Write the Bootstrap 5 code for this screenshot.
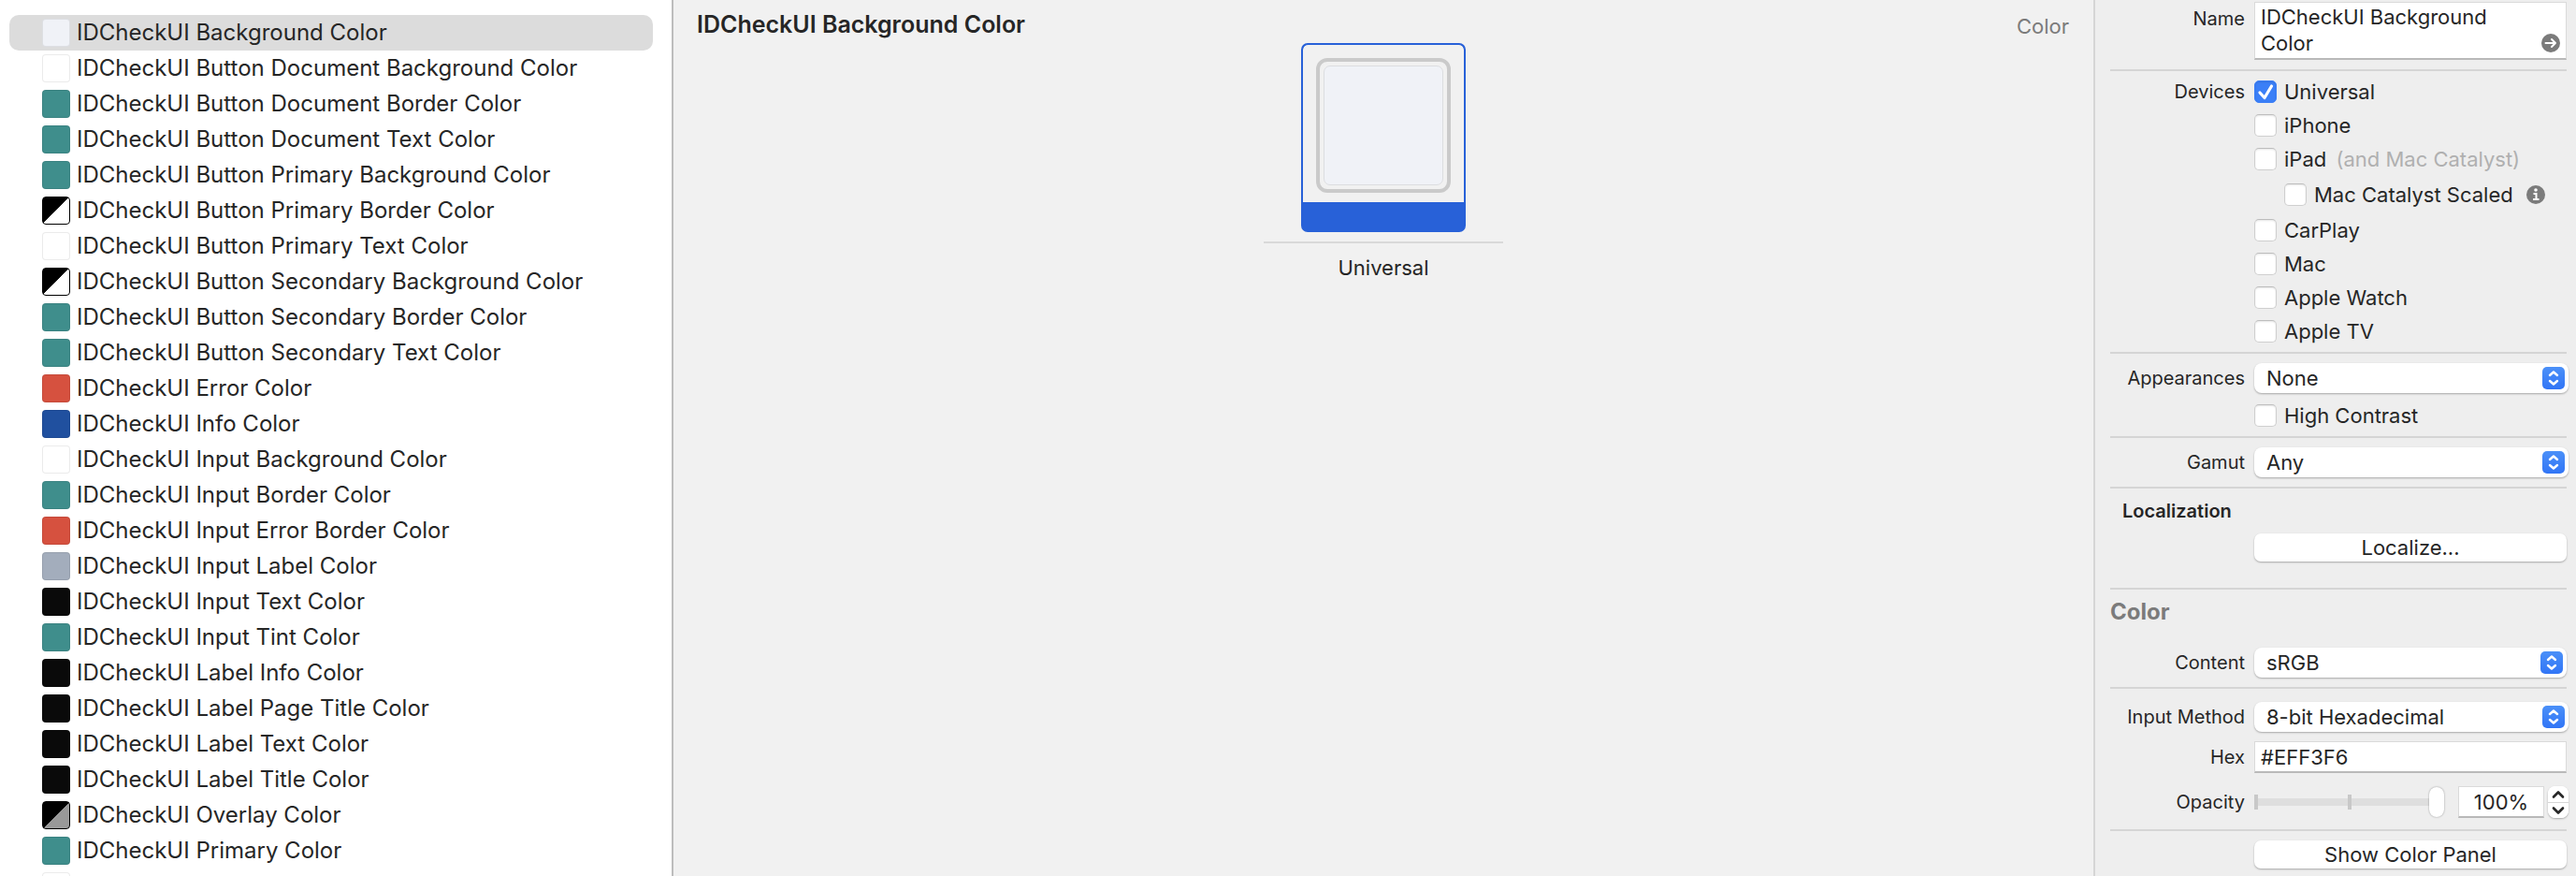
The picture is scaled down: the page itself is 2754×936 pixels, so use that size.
<!DOCTYPE html>
<html lang="en">
<head>
<meta charset="utf-8">
<meta name="viewport" content="width=device-width, initial-scale=1">
<title>Color asset catalog</title>
<link href="https://cdn.jsdelivr.net/npm/bootstrap@5.3.0/dist/css/bootstrap.min.css" rel="stylesheet">
<style>
  body { font-family: Inter, "Liberation Sans", sans-serif; font-size: 22px; line-height: 28px; color: #262626; background: #f1f1f1; }

  /* asset list */
  .asset-list { flex: 0 0 720px; border-right: 2px solid #bdbdbd; background: #fff; padding: 16px 20px 0 10px; }
  .asset-list .list-group-item { height: 38px; padding: 0 0 0 35px; gap: 7px; border: 0; border-radius: 10px; font-size: 24px; color: #262626; background: transparent; }
  .asset-list .list-group-item.active { background: #dcdcdc; margin: 0; }
  .swatch { flex: 0 0 30px; height: 30px; border-radius: 4px; border: 1px solid rgba(0,0,0,.08); }
  .sw-bg { background: #f0f2f7; }
  .sw-white { background: #fff; }
  .sw-teal { background: #3f8e8c; }
  .sw-red { background: #d6513f; }
  .sw-blue { background: #20509f; }
  .sw-gray { background: #a3adbc; }
  .sw-black { background: #0a0a0a; }
  .sw-split { background: linear-gradient(to bottom right, #000 50%, #fff 50%); border-color: #000; }
  .sw-overlay { background: linear-gradient(to bottom right, #000 50%, #999 50%); border-color: #000; }

  /* preview */
  .preview-head { height: 46px; padding: 12px 26px 0 25px; }
  .preview-head h1 { font-size: 25px; line-height: 28px; font-weight: 600; }
  .kind { color: #7b7b7b; line-height: 32px; }
  .tile { width: 176px; border: 2px solid #2861d8; border-radius: 7px; background: #2861d8; padding-bottom: 30px; overflow: hidden; }
  .tile-well { background: #f1f1f1; padding: 14px 14px 10px; border-radius: 5px 5px 0 0; }
  .tile-ring { height: 144px; border: 4px solid #cacaca; border-radius: 12px; padding: 4px; }
  .tile-color { border: 1px solid #dcdde0; border-radius: 7px; background: #f0f2f7; }
  .slot { width: 256px; padding-bottom: 10px; border-bottom: 2px solid #d9d9d9; }

  /* inspector */
  .inspector { flex: 0 0 516px; border-left: 2px solid #d5d5d5; background: #eee; padding: 2px 10px 0 16px; }
  .inspector hr { margin: 10px 0; border-top: 2px solid #d5d5d5; opacity: 1; }
  .inspector .hr-roomy { margin-top: 28px; }
  .inspector .hr-low { margin-bottom: 14px; }
  .inspector .hr-last { margin: 12px 0 10px; }
  .field { display: grid; grid-template-columns: 144px minmax(0, 1fr); column-gap: 10px; align-items: center; }
  .field-name { font-size: 20px; line-height: 28px; }
  .field > .field-name { text-align: right; }
  .field-devices { line-height: 24px; }
  .field-next { margin-top: 10px; }
  .field-slider { margin-top: 14px; }
  .group-name { padding-left: 13px; margin: 0 0 10px; font-weight: 600; }
  .note { color: #b0b0b0; }
  .box { border: 1px solid #dadada; border-bottom: 2px solid #b9b9b9; border-radius: 0; background: #fff; height: 34px; padding: 0 6px; font-size: 22px; line-height: 28px; color: #262626; }
  .box-name { height: 62px; padding: 1px 40px 0 6px; resize: none; overflow: hidden; display: block; }
  .box-percent { width: 92px; text-align: center; margin: 0 4px 0 15px; }
  .go { right: 7px; bottom: 8px; }
  .tick { display: flex; align-items: center; gap: 8px; min-height: 24px; line-height: 24px; }
  .tick .form-check-input { flex: none; width: 24px; height: 24px; margin: 0; border: 1px solid #cfcfcf; border-top-color: #bdbdbd; border-radius: 5px; background-color: #fff; box-shadow: inset 0 1px 2px rgba(0,0,0,.1); }
  .tick .form-check-input:checked { border-color: #3b7ff7; background-color: #3b7ff7; background-size: 24px; background-image: url("data:image/svg+xml,%3Csvg xmlns='http://www.w3.org/2000/svg' viewBox='0 0 24 24'%3E%3Cpath d='M6 13l5 5.500L18.500 6' fill='none' stroke='%23fff' stroke-width='3.200' stroke-linecap='round' stroke-linejoin='round'/%3E%3C/svg%3E"); }
  .ticks { display: grid; row-gap: 12px; }
  .tick-sub { height: 28px; padding-left: 32px; gap: 14px; }
  .tick-below { margin-top: 12px; }
  .picker { height: 32px; border: 0; border-radius: 8px; padding: 0 36px 0 13px; font-size: 22px; line-height: 28px; color: #262626; box-shadow: 0 1px 2px rgba(0,0,0,.3); background-color: #fff; background-size: 24px 24px; background-position: right 4px center;
    background-image: url("data:image/svg+xml,%3Csvg xmlns='http://www.w3.org/2000/svg' viewBox='0 0 24 24'%3E%3ClinearGradient id='g' x2='0' y2='1'%3E%3Cstop stop-color='%234b90f8'/%3E%3Cstop offset='1' stop-color='%233175f6'/%3E%3C/linearGradient%3E%3Crect width='24' height='24' rx='5' fill='url(%23g)'/%3E%3Cpath d='M8 9l4-3.500L16 9M8 15l4 3.500L16 15' fill='none' stroke='%23fff' stroke-width='2.400' stroke-linecap='round' stroke-linejoin='round'/%3E%3C/svg%3E"); }
  .picker-wide { width: calc(100% + 2px); }
  .push { height: 30px; padding: 0; border: 0; border-radius: 7px; background: #fff; font-size: 22px; line-height: 28px; color: #262626; box-shadow: 0 1px 2px rgba(0,0,0,.3); }
  .push:hover { background: #f8f8f8; }
  .section-name { font-size: 24px; line-height: 28px; color: #7b7b7b; margin: 0 0 24px; }
  .slider-row { margin-right: -2px; }
  .opacity-range { flex: 1 1 0; min-width: 0; height: 34px; padding: 0; background: linear-gradient(#c8c8c8,#c8c8c8) 0 50%/4px 16px no-repeat, linear-gradient(#c8c8c8,#c8c8c8) 50% 50%/4px 16px no-repeat, linear-gradient(#dedede,#dedede) 0 50%/calc(100% - 8px) 8px no-repeat; }
  .opacity-range::-webkit-slider-runnable-track { height: 34px; background: transparent; }
  .opacity-range::-webkit-slider-thumb { width: 16px; height: 32px; margin-top: 1px; border: 0; border-radius: 8px; background: #fff; box-shadow: 0 0 2px rgba(0,0,0,.4); }
  .stepper { width: 22px; height: 34px; border-radius: 8px; background: #fff; box-shadow: 0 1px 2px rgba(0,0,0,.3); overflow: hidden; }
  .stepper button { height: 17px; padding: 0; border: 0; background: #fff; }
  .stepper button + button { border-top: 1px solid #d5d5d5; }
  .stepper svg { display: block; margin: auto; }
</style>
</head>
<body>
<div class="d-flex vh-100 overflow-hidden">

  <nav class="asset-list overflow-hidden" aria-label="Color assets">
    <div class="list-group" id="assets"></div>
  </nav>

  <main class="flex-grow-1">
    <header class="preview-head d-flex justify-content-between">
      <h1 class="m-0">IDCheckUI Background Color</h1>
      <span class="kind">Color</span>
    </header>
    <figure class="d-flex flex-column align-items-center m-0">
      <div class="slot d-flex justify-content-center">
        <div class="tile">
          <div class="tile-well"><div class="tile-ring"><div class="tile-color h-100"></div></div></div>
        </div>
      </div>
      <figcaption class="pt-2 mt-1">Universal</figcaption>
    </figure>
  </main>

  <aside class="inspector">
    <div class="field align-items-start">
      <label class="field-name pt-1" for="name">Name</label>
      <div class="position-relative">
        <textarea class="box box-name w-100" id="name" rows="2">IDCheckUI Background Color</textarea>
        <a class="go position-absolute d-flex" href="#name" aria-label="Go to asset">
          <svg width="20" height="20" viewBox="0 0 20 20"><circle cx="10" cy="10" r="10" fill="#7b7b7b"/><path d="M4.500 10H15M11 6l4 4-4 4" fill="none" stroke="#fff" stroke-width="2" stroke-linecap="round" stroke-linejoin="round"/></svg>
        </a>
      </div>
    </div>
    <hr>
    <div class="field align-items-start">
      <span class="field-name field-devices" id="devices">Devices</span>
      <div class="ticks" role="group" aria-labelledby="devices">
        <label class="tick"><input class="form-check-input" type="checkbox" checked>Universal</label>
        <label class="tick"><input class="form-check-input" type="checkbox">iPhone</label>
        <label class="tick"><input class="form-check-input" type="checkbox"><span>iPad <span class="note ms-1">(and Mac Catalyst)</span></span></label>
        <div class="tick-sub d-flex align-items-center">
          <label class="tick"><input class="form-check-input" type="checkbox">Mac Catalyst Scaled</label>
          <svg width="20" height="20" viewBox="0 0 20 20"><circle cx="10" cy="10" r="10" fill="#7b7b7b"/><circle cx="10" cy="5" r="1.800" fill="#fff"/><path d="M7.500 9h3v5.500M7 15h6.500" fill="none" stroke="#fff" stroke-width="2"/></svg>
        </div>
        <label class="tick"><input class="form-check-input" type="checkbox">CarPlay</label>
        <label class="tick"><input class="form-check-input" type="checkbox">Mac</label>
        <label class="tick"><input class="form-check-input" type="checkbox">Apple Watch</label>
        <label class="tick"><input class="form-check-input" type="checkbox">Apple TV</label>
      </div>
    </div>
    <hr>
    <div class="field">
      <label class="field-name" for="appearances">Appearances</label>
      <select class="form-select picker picker-wide" id="appearances"><option>None</option></select>
      <span></span>
      <label class="tick tick-below"><input class="form-check-input" type="checkbox">High Contrast</label>
    </div>
    <hr>
    <div class="field">
      <label class="field-name" for="gamut">Gamut</label>
      <select class="form-select picker picker-wide" id="gamut"><option>Any</option></select>
    </div>
    <hr>
    <h2 class="field-name group-name">Localization</h2>
    <div class="field"><span></span><button type="button" class="btn push">Localize...</button></div>
    <hr class="hr-roomy">
    <h2 class="section-name fw-bold">Color</h2>
    <div class="field">
      <label class="field-name" for="content">Content</label>
      <select class="form-select picker" id="content"><option>sRGB</option></select>
    </div>
    <hr class="hr-low">
    <div class="field">
      <label class="field-name" for="method">Input Method</label>
      <select class="form-select picker picker-wide" id="method"><option>8-bit Hexadecimal</option></select>
    </div>
    <div class="field field-next">
      <label class="field-name" for="hex">Hex</label>
      <input class="box" id="hex" type="text" value="#EFF3F6">
    </div>
    <div class="field field-slider">
      <label class="field-name" for="opacity">Opacity</label>
      <div class="slider-row d-flex align-items-center">
        <input class="form-range opacity-range" id="opacity" type="range" value="100">
        <input class="box box-percent" type="text" value="100%" aria-label="Opacity percent">
        <div class="stepper d-flex flex-column">
          <button type="button" aria-label="Increase"><svg width="14" height="10" viewBox="0 0 14 10"><path d="M2 7.500l5-5 5 5" fill="none" stroke="#262626" stroke-width="2.600" stroke-linecap="round" stroke-linejoin="round"/></svg></button>
          <button type="button" aria-label="Decrease"><svg width="14" height="10" viewBox="0 0 14 10"><path d="M2 2.500l5 5 5-5" fill="none" stroke="#262626" stroke-width="2.600" stroke-linecap="round" stroke-linejoin="round"/></svg></button>
        </div>
      </div>
    </div>
    <hr class="hr-last">
    <div class="field"><span></span><button type="button" class="btn push">Show Color Panel</button></div>
  </aside>
</div>

<script src="https://cdn.jsdelivr.net/npm/bootstrap@5.3.0/dist/js/bootstrap.bundle.min.js"></script>
<script>
  const assets = [
    ["bg", "Background"], ["white", "Button Document Background"], ["teal", "Button Document Border"],
    ["teal", "Button Document Text"], ["teal", "Button Primary Background"], ["split", "Button Primary Border"],
    ["white", "Button Primary Text"], ["split", "Button Secondary Background"], ["teal", "Button Secondary Border"],
    ["teal", "Button Secondary Text"], ["red", "Error"], ["blue", "Info"], ["white", "Input Background"],
    ["teal", "Input Border"], ["red", "Input Error Border"], ["gray", "Input Label"], ["black", "Input Text"],
    ["teal", "Input Tint"], ["black", "Label Info"], ["black", "Label Page Title"], ["black", "Label Text"],
    ["black", "Label Title"], ["overlay", "Overlay"], ["teal", "Primary"], ["white", ""]
  ];
  document.getElementById("assets").innerHTML = assets.map(([tone, name], i) =>
    `<a href="#" class="list-group-item d-flex align-items-center${i ? "" : " active"}"><span class="swatch sw-${tone}"></span>${name && `IDCheckUI ${name} Color`}</a>`).join("");
</script>
</body>
</html>
